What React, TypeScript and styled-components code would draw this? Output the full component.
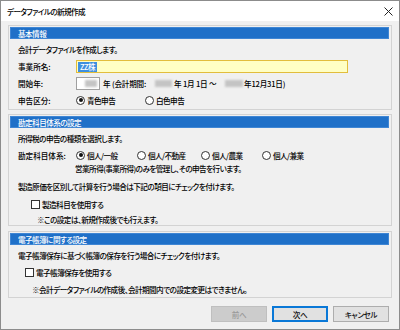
import React from "react";
import styled, { createGlobalStyle } from "styled-components";

const Global = createGlobalStyle`
  html, body { margin: 0; padding: 0; background: #ffffff; }
  * { box-sizing: border-box; }
  body {
    font-family: "Noto Sans CJK JP", "Noto Sans", sans-serif;
    font-size: 7.6px;
    font-weight: 500;
    letter-spacing: -0.55px;
    color: #000;
    font-feature-settings: "palt";
  }
`;

const Dialog = styled.div`
  width: 400px;
  height: 330px;
  border: 1px solid #8c8c8c;
  background: #f0f0f0;
  display: flex;
  flex-direction: column;
`;

const TitleBar = styled.div`
  height: 20px;
  background: #ffffff;
  display: flex;
  align-items: center;
  justify-content: space-between;
  padding: 0 6px 0 6px;
  flex-shrink: 0;
`;

const Title = styled.span`
  font-size: 7.6px;
  letter-spacing: -0.6px;
  color: #000;
`;

const CloseIcon = styled.svg`
  width: 9px;
  height: 9px;
`;

const Body = styled.div`
  padding: 4px 7px 0 7px;
  display: flex;
  flex-direction: column;
`;

const Group = styled.div<{ $mt: number; $pb: number }>`
  margin-top: ${(p) => p.$mt}px;
  border: 1px solid #d3d3d3;
  padding: 1px 2px ${(p) => p.$pb}px 1px;
  display: flex;
  flex-direction: column;
`;

const GroupHeader = styled.div`
  height: 12px;
  background: #1f70c8;
  border: 1px solid #3f86d4;
  color: #ffffff;
  display: flex;
  align-items: center;
  padding-left: 7px;
`;

const Row = styled.div<{ $mt: number; $h?: number; $pl?: number }>`
  margin-top: ${(p) => p.$mt}px;
  height: ${(p) => p.$h ?? 12}px;
  padding-left: ${(p) => 8 + (p.$pl ?? 0)}px;
  display: flex;
  align-items: center;
  white-space: nowrap;
`;

const Label = styled.span`
  width: 58px;
  flex-shrink: 0;
  letter-spacing: 0;
`;

const NameInput = styled.div`
  width: 272px;
  height: 13px;
  background: #ffffc4;
  border: 1px solid #e2bd3c;
  display: flex;
  align-items: center;
  padding-left: 1px;
`;

const Selected = styled.span`
  background: #3d8fe0;
  color: #ffffff;
  padding: 0 2px;
  line-height: 10px;
`;

const YearBox = styled.div`
  width: 24px;
  height: 13px;
  background: #ffffff;
  border: 1px solid #a0a0a0;
  display: flex;
  align-items: center;
  justify-content: flex-end;
  padding-right: 2px;
`;

const Blur = styled.span<{ $w: number }>`
  display: inline-block;
  flex-shrink: 0;
  width: ${(p) => p.$w}px;
  height: 7px;
  background: #c4c4c4;
  filter: blur(1px);
`;

const Segment = styled.span<{ $w?: number; $ml?: number }>`
  margin-left: ${(p) => p.$ml ?? 0}px;
  width: ${(p) => (p.$w ? `${p.$w}px` : "auto")};
  flex-shrink: 0;
  letter-spacing: -0.2px;
`;

const RadioItem = styled.label<{ $w: number }>`
  width: ${(p) => p.$w}px;
  display: flex;
  align-items: center;
  gap: 2px;
  flex-shrink: 0;
`;

const RadioCircle = styled.span<{ $on?: boolean }>`
  width: 9px;
  height: 9px;
  border-radius: 50%;
  border: 1px solid #333;
  background: #fff;
  display: inline-flex;
  align-items: center;
  justify-content: center;
  &::after {
    content: "";
    width: 4px;
    height: 4px;
    border-radius: 50%;
    background: ${(p) => (p.$on ? "#111" : "transparent")};
  }
`;

const CheckBox = styled.span`
  width: 9px;
  height: 9px;
  border: 1px solid #333;
  background: #fff;
  margin-right: 2px;
  flex-shrink: 0;
`;

const ButtonBar = styled.div`
  margin-top: 8px;
  display: flex;
  justify-content: flex-end;
  gap: 5px;
  padding-right: 10px;
`;

const Button = styled.button<{ $variant?: "default" | "disabled" }>`
  width: 56px;
  height: 16px;
  padding: 0;
  font-family: inherit;
  font-size: 7.6px;
  font-weight: 500;
  letter-spacing: -0.4px;
  font-feature-settings: "palt";
  background: ${(p) => (p.$variant === "disabled" ? "#cccccc" : "#e1e1e1")};
  color: ${(p) => (p.$variant === "disabled" ? "#9a9a9a" : "#111")};
  border: 1px solid
    ${(p) =>
      p.$variant === "default"
        ? "#0a78d7"
        : p.$variant === "disabled"
        ? "#bfbfbf"
        : "#adadad"};
  box-shadow: ${(p) => (p.$variant === "default" ? "inset 0 0 0 1px #0a78d7" : "none")};
`;

export default function App() {
  return (
    <>
      <Global />
      <Dialog>
        <TitleBar>
          <Title>データファイルの新規作成</Title>
          <CloseIcon viewBox="0 0 9 9">
            <path d="M0.5 0.5 L8.5 8.5 M8.5 0.5 L0.5 8.5" stroke="#222" strokeWidth="1" />
          </CloseIcon>
        </TitleBar>
        <Body>
          <Group $mt={0} $pb={3}>
            <GroupHeader>基本情報</GroupHeader>
            <Row $mt={4}>会計データファイルを作成します。</Row>
            <Row $mt={5} $h={13}>
              <Label>事業所名:</Label>
              <NameInput>
                <Selected>ZZ株</Selected>
              </NameInput>
            </Row>
            <Row $mt={4} $h={13}>
              <Label>開始年:</Label>
              <YearBox>
                <Blur $w={12} />
              </YearBox>
              <Segment $ml={3} $w={52}>年 (会計期間:</Segment>
              <Blur $w={17} />
              <Segment $ml={2} $w={51}>年 1月 1日 ～</Segment>
              <Blur $w={18} />
              <Segment $ml={1}>年12月31日)</Segment>
            </Row>
            <Row $mt={4}>
              <Label>申告区分:</Label>
              <RadioItem $w={69}>
                <RadioCircle $on />
                青色申告
              </RadioItem>
              <RadioItem $w={69}>
                <RadioCircle />
                白色申告
              </RadioItem>
            </Row>
          </Group>

          <Group $mt={4} $pb={0}>
            <GroupHeader>勘定科目体系の設定</GroupHeader>
            <Row $mt={4}>所得税の申告の種類を選択します。</Row>
            <Row $mt={5}>
              <Label>勘定科目体系:</Label>
              <RadioItem $w={61}>
                <RadioCircle $on />
                個人/一般
              </RadioItem>
              <RadioItem $w={64}>
                <RadioCircle />
                個人/不動産
              </RadioItem>
              <RadioItem $w={61}>
                <RadioCircle />
                個人/農業
              </RadioItem>
              <RadioItem $w={61}>
                <RadioCircle />
                個人/兼業
              </RadioItem>
            </Row>
            <Row $mt={1} $pl={57}>
              営業所得(事業所得)のみを管理し、その申告を行います。
            </Row>
            <Row $mt={6}>製造原価を区別して計算を行う場合は下記の項目にチェックを付けます。</Row>
            <Row $mt={6} $pl={13}>
              <CheckBox />
              製造科目を使用する
            </Row>
            <Row $mt={3} $pl={19}>
              ※この設定は、新規作成後でも行えます。
            </Row>
          </Group>

          <Group $mt={5} $pb={2}>
            <GroupHeader>電子帳簿に関する設定</GroupHeader>
            <Row $mt={4}>電子帳簿保存に基づく帳簿の保存を行う場合にチェックを付けます。</Row>
            <Row $mt={5} $pl={7}>
              <CheckBox />
              電子帳簿保存を使用する
            </Row>
            <Row $mt={5} $pl={14}>
              ※会計データファイルの作成後、会計期間内での設定変更はできません。
            </Row>
          </Group>
        </Body>
        <ButtonBar>
          <Button $variant="disabled">前へ</Button>
          <Button $variant="default">次へ</Button>
          <Button>キャンセル</Button>
        </ButtonBar>
      </Dialog>
    </>
  );
}
